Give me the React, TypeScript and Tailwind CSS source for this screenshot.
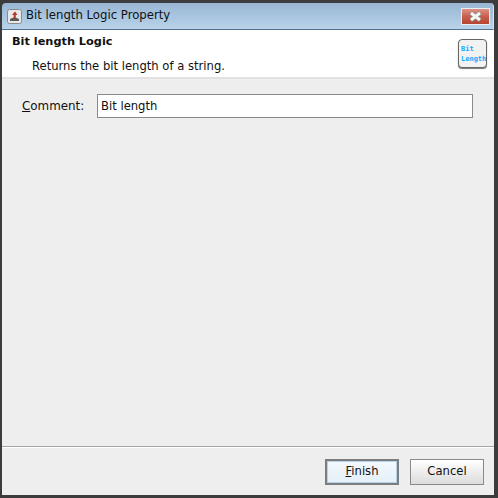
const App = () => {
  return (
    <div className="flex h-[498px] w-[498px] flex-col overflow-hidden bg-[#3c3c3c] pt-[3px] pr-[4px] pb-[3px] pl-[2px] font-['DejaVu_Sans',sans-serif] text-[11.6px] text-[#111]">
      {/* title bar */}
      <div className="flex h-[27px] shrink-0 items-center rounded-t-[4px] border-r border-b border-r-[#d4e6f3] border-b-[#54708c] bg-gradient-to-b from-[#98b6d4] to-[#b9d3ea] pl-[5px] pr-[3px]">
        <svg width="15" height="15" viewBox="0 0 15 15" className="mr-[4px] shrink-0">
          <rect x="0.5" y="0.5" width="14" height="14" rx="2" fill="#e8e8e8" stroke="#8a8a8a" />
          <path d="M3 10l4.5-2 4.500 2v2h-9z" fill="#5a5a5a" />
          <path d="M8 2.500l2.500 3.500h-1.800v3.500h-2v-3.500h-1.700z" fill="#b3362c" />
        </svg>
        <span className="text-[11.7px] leading-none">Bit length Logic Property</span>
        <div className="ml-auto flex h-[17px] w-[29px] items-center justify-center border border-[#e8eef4] bg-gradient-to-b from-[#dd9488] via-[#c65f4d] to-[#b5452f]">
          <svg width="15" height="11" viewBox="0 0 15 11">
            <path d="M3 2l9 7M12 2l-9 7" stroke="#8a8a8a" strokeWidth="4.500" />
            <path d="M3 2l9 7M12 2l-9 7" stroke="#f6f6f6" strokeWidth="3" />
          </svg>
        </div>
      </div>

      <div className="flex min-h-0 flex-1 flex-col bg-[#eeeeee]">
        {/* header */}
        <div className="flex h-[49px] shrink-0 justify-between border-b-2 border-[#e2e2e2] bg-white pl-[10px] pr-[7px]">
          <div>
            <div className="mt-[4px] text-[11.3px] font-bold leading-[16px]">Bit length Logic</div>
            <div className="mt-[8px] pl-[20px] leading-[16px]">Returns the bit length of a string.</div>
          </div>
          <div className="mt-[9px] flex h-[29px] w-[29px] flex-col justify-center rounded-[4px] border border-[#666] bg-[#f2f2f2] pl-[2px] font-['DejaVu_Sans_Mono',monospace] text-[7px] font-bold leading-[10px] text-[#18a8ff] shadow-[0_1px_1px_#777]">
            <span>Bit</span>
            <span>Length</span>
          </div>
        </div>

        {/* form */}
        <div className="flex flex-1 items-start pl-[20px] pr-[21px] pt-[15px]">
          <label className="mt-[4px] w-[75px] shrink-0 text-[11.9px] leading-[16px]">
            <span className="underline">C</span>omment:
          </label>
          <input
            readOnly
            value="Bit length"
            className="h-[24px] min-w-0 flex-1 border border-[#8a8a8a] bg-white px-[3px] text-[11.6px] outline-none"
          />
        </div>

        {/* footer */}
        <div className="flex h-[49px] shrink-0 items-start justify-end gap-[11px] border-t border-[#a5a5a5] pr-[10px] pt-[12px] shadow-[inset_0_1px_0_#fff]">
          <button className="h-[26px] w-[74px] border-2 border-[#7d7d7d] bg-gradient-to-b from-[#f4f9fd] to-[#e4eff8] text-[11.6px] shadow-[inset_0_0_0_1px_#b5d3ee]">
            <span className="underline">F</span>inish
          </button>
          <button className="h-[26px] w-[74px] border border-[#8a8a8a] bg-gradient-to-b from-[#ffffff] to-[#dcdcdc] text-[11.6px]">
            Cancel
          </button>
        </div>
      </div>
    </div>
  );
};

export default App;
